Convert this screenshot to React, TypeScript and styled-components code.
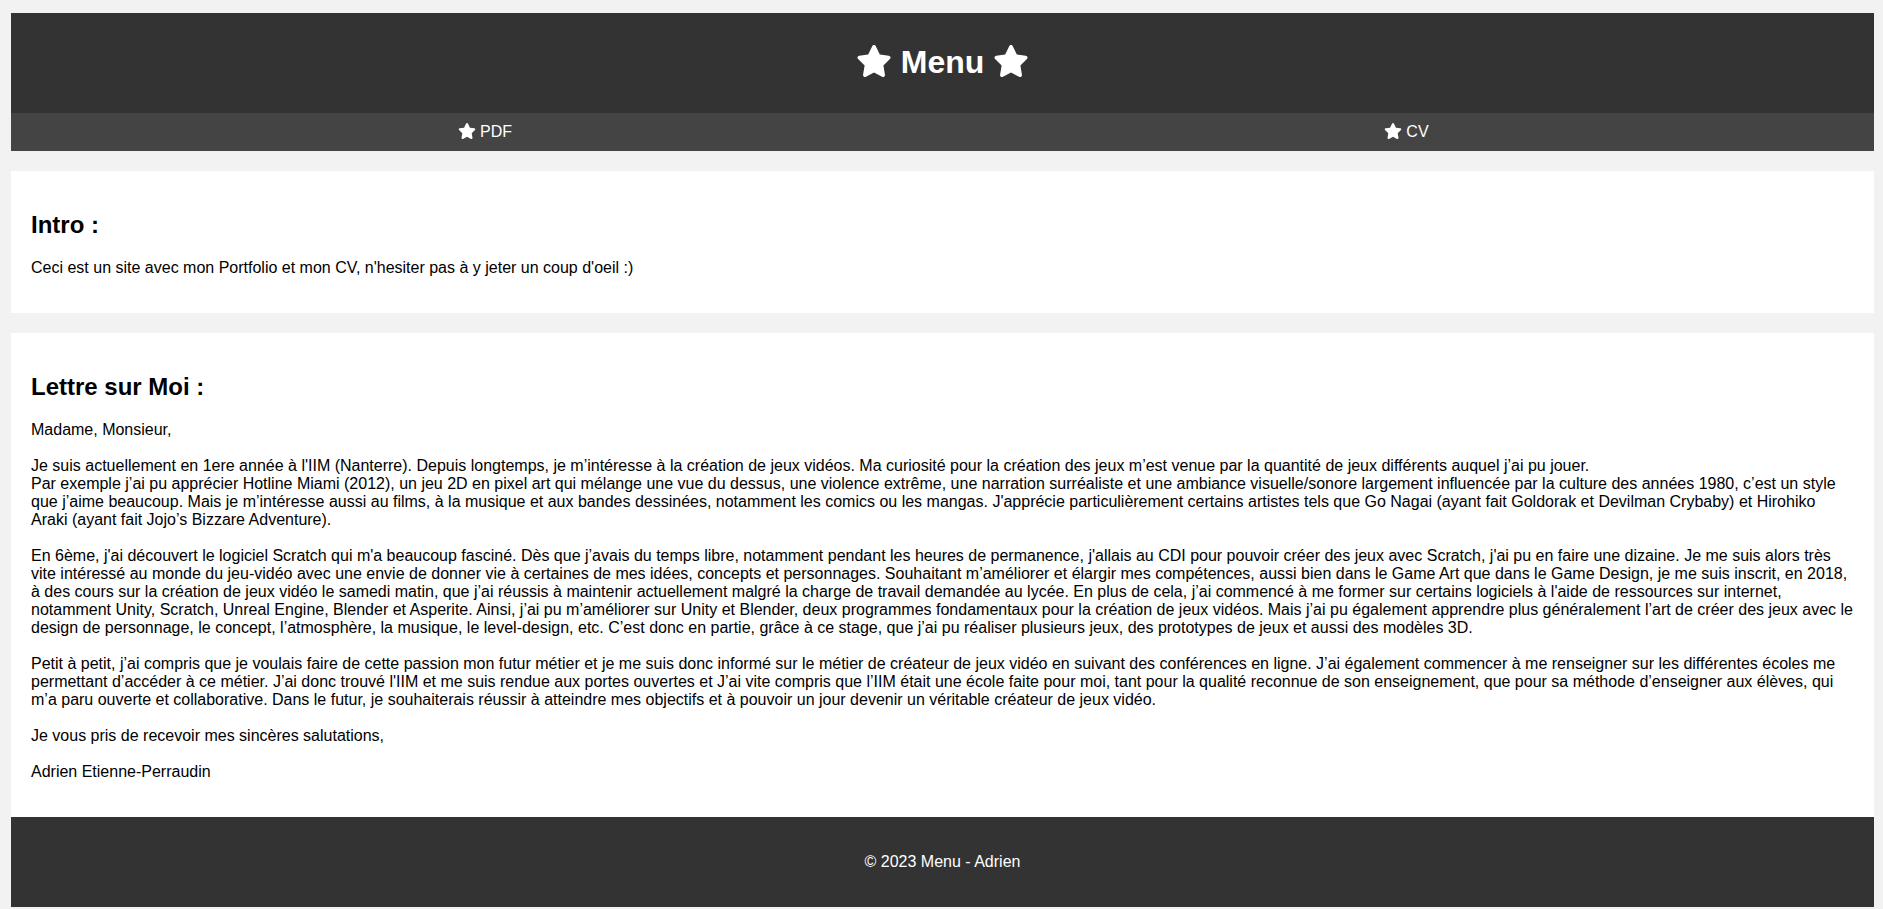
import React from "react";
import styled, { createGlobalStyle } from "styled-components";
import { FaStar } from "react-icons/fa6";

const GlobalStyle = createGlobalStyle`
  html, body {
    margin: 0;
    padding: 0;
    background: #f2f2f2;
  }
  body {
    font-family: "Liberation Sans", Arial, sans-serif;
    font-size: 16px;
    color: #000;
  }
`;

const Page = styled.div`
  padding: 13px 9px 0 11px;
  display: flex;
  flex-direction: column;
`;

const Header = styled.header`
  background: #333333;
  color: #fff;
  padding: 10px;
  text-align: center;
`;

const Title = styled.h1`
  font-size: 32px;
  font-weight: bold;
  margin: 21.44px 0;
  line-height: 37px;
`;

const Star = styled(FaStar)<{ $size: number }>`
  width: ${(p) => p.$size * 1.125}px;
  height: ${(p) => p.$size}px;
  vertical-align: -0.125em;
  fill: currentColor;
`;

const Nav = styled.nav`
  display: flex;
  background: #444444;
  padding: 0 7px 0 13px;
`;

const NavLink = styled.a`
  flex: 1;
  text-align: center;
  color: #fff;
  text-decoration: none;
  padding: 10px 0;
  line-height: 18px;
  font-size: 16px;
`;

const Card = styled.section`
  background: #fff;
  padding: 20px;
  margin-top: 20px;
`;

const Heading = styled.h2`
  font-size: 24px;
  font-weight: bold;
  margin: 19.92px 0;
  line-height: 28px;
`;

const Para = styled.p<{ $last?: boolean }>`
  margin: 0 0 ${(p) => (p.$last ? 16 : 18)}px;
  line-height: 18px;
`;

const Footer = styled.footer`
  background: #333333;
  color: #fff;
  padding: 20px;
  text-align: center;
`;

const FooterText = styled.p`
  margin: 16px 0;
  line-height: 18px;
`;

export default function App() {
  return (
    <>
      <GlobalStyle />
      <Page>
        <Header>
          <Title>
            <Star $size={32} /> Menu <Star $size={32} />
          </Title>
        </Header>
        <Nav>
          <NavLink href="#">
            <Star $size={16} /> PDF
          </NavLink>
          <NavLink href="#">
            <Star $size={16} /> CV
          </NavLink>
        </Nav>

        <Card>
          <Heading>Intro :</Heading>
          <Para $last>
            Ceci est un site avec mon Portfolio et mon CV, n'hesiter pas à y jeter un coup d'oeil :)
          </Para>
        </Card>

        <Card>
          <Heading>Lettre sur Moi :</Heading>
          <Para>Madame, Monsieur,</Para>
          <Para>
            Je suis actuellement en 1ere année à l'IIM (Nanterre). Depuis longtemps, je m’intéresse à la
            création de jeux vidéos. Ma curiosité pour la création des jeux m’est venue par la quantité de jeux
            différents auquel j’ai pu jouer.
            <br />
            Par exemple j’ai pu apprécier Hotline Miami (2012), un jeu 2D en pixel art qui mélange une vue du
            dessus, une violence extrême, une narration surréaliste et une ambiance visuelle/sonore largement
            influencée par la culture des années 1980, c’est un style que j’aime beaucoup. Mais je m’intéresse
            aussi au films, à la musique et aux bandes dessinées, notamment les comics ou les mangas. J'apprécie
            particulièrement certains artistes tels que Go Nagai (ayant fait Goldorak et Devilman Crybaby) et
            Hirohiko Araki (ayant fait Jojo’s Bizzare Adventure).
          </Para>
          <Para>
            En 6ème, j'ai découvert le logiciel Scratch qui m'a beaucoup fasciné. Dès que j’avais du temps libre,
            notamment pendant les heures de permanence, j'allais au CDI pour pouvoir créer des jeux avec
            Scratch, j'ai pu en faire une dizaine. Je me suis alors très vite intéressé au monde du jeu-vidéo
            avec une envie de donner vie à certaines de mes idées, concepts et personnages. Souhaitant
            m’améliorer et élargir mes compétences, aussi bien dans le Game Art que dans le Game Design, je me
            suis inscrit, en 2018, à des cours sur la création de jeux vidéo le samedi matin, que j’ai réussis à
            maintenir actuellement malgré la charge de travail demandée au lycée. En plus de cela, j’ai commencé
            à me former sur certains logiciels à l'aide de ressources sur internet,
            <br />
            notamment Unity, Scratch, Unreal Engine, Blender et Asperite. Ainsi, j’ai pu m’améliorer sur Unity et
            Blender, deux programmes fondamentaux pour la création de jeux vidéos. Mais j’ai pu également
            apprendre plus généralement l’art de créer des jeux avec le design de personnage, le concept,
            l’atmosphère, la musique, le level-design, etc. C’est donc en partie, grâce à ce stage, que j’ai pu
            réaliser plusieurs jeux, des prototypes de jeux et aussi des modèles 3D.
          </Para>
          <Para>
            Petit à petit, j’ai compris que je voulais faire de cette passion mon futur métier et je me suis
            donc informé sur le métier de créateur de jeux vidéo en suivant des conférences en ligne. J’ai
            également commencer à me renseigner sur les différentes écoles me permettant d’accéder à ce métier.
            J’ai donc trouvé l'IIM et me suis rendue aux portes ouvertes et J’ai vite compris que l’IIM était une
            école faite pour moi, tant pour la qualité reconnue de son enseignement, que pour sa méthode
            d’enseigner aux élèves, qui m’a paru ouverte et collaborative. Dans le futur, je souhaiterais
            réussir à atteindre mes objectifs et à pouvoir un jour devenir un véritable créateur de jeux vidéo.
          </Para>
          <Para>Je vous pris de recevoir mes sincères salutations,</Para>
          <Para $last>Adrien Etienne-Perraudin</Para>
        </Card>

        <Footer>
          <FooterText>© 2023 Menu - Adrien</FooterText>
        </Footer>
      </Page>
    </>
  );
}
